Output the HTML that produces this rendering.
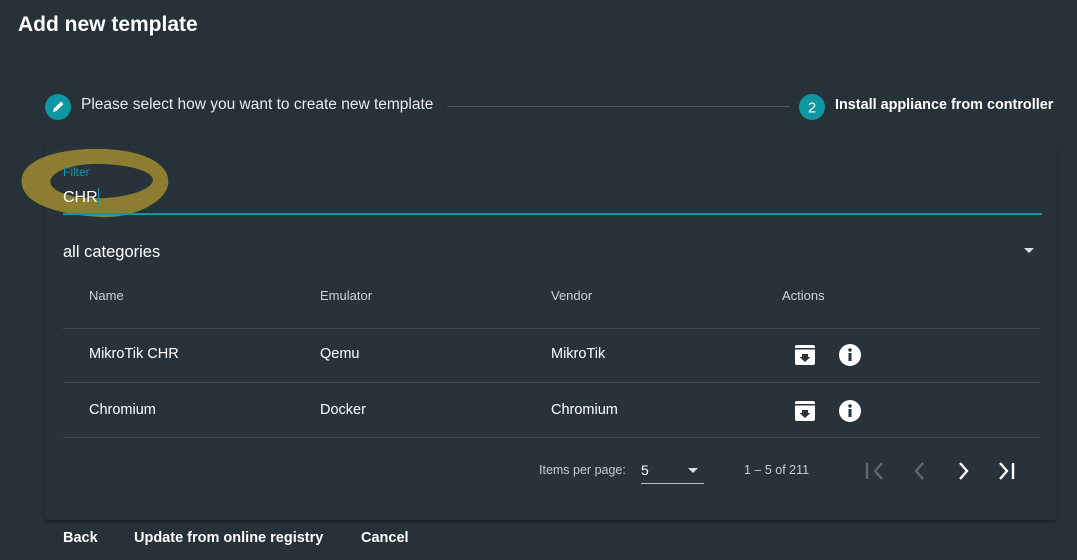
<!DOCTYPE html>
<html><head><meta charset="utf-8"><style>
body{margin:0;width:1077px;height:560px;background:#263238;font-family:"Liberation Sans",sans-serif;color:#fff;position:relative;overflow:hidden}
.a{position:absolute;white-space:nowrap}
.card{position:absolute;left:45px;top:145px;width:1012px;height:375px;background:#28323a;border-radius:4px;box-shadow:0 2px 3px rgba(0,0,0,.35)}
.th{font-size:13px;color:#cfd3d6;top:288px}
.td{font-size:14.5px;color:#fff;margin-top:1px}
.hr{position:absolute;left:63px;width:977px;height:1px;background:#3f4a52}
</style></head><body>
<div class="a" style="left:18px;top:13px;font-size:21px;font-weight:bold">Add new template</div>
<svg class="a" style="left:45px;top:94px" width="26" height="26" viewBox="0 0 26 26"><circle cx="13" cy="13" r="13" fill="#0c97a3"/><path d="M8 18 l1-3.5 7-7 2.5 2.5-7 7z" fill="#fff"/></svg>
<div class="a" style="left:81px;top:96px;font-size:15.5px;color:#e8eaeb">Please select how you want to create new template</div>
<div class="a" style="left:447px;top:106px;width:343px;height:1px;background:#4a555c"></div>
<svg class="a" style="left:799px;top:94px" width="26" height="26"><circle cx="13" cy="13" r="13" fill="#0c97a3"/><text x="13" y="18.5" font-size="15" fill="#fff" text-anchor="middle" font-family="Liberation Sans">2</text></svg>
<div class="a" style="left:835px;top:97px;font-size:14.4px;font-weight:bold">Install appliance from controller</div>
<div class="card"></div>
<svg class="a" style="left:16px;top:143px" width="160" height="80"><path d="M72 6 C124 4 156 20 152 42 C148 62 112 76 84 74 C50 72 10 64 6 42 C2 20 32 8 72 6 Z M36 34 C30 42 40 50 60 54 C90 58 128 52 136 40 C142 30 118 22 86 21 C62 20 42 26 36 34Z" fill="#8c7d30" fill-rule="evenodd"/></svg>
<div class="a" style="left:63px;top:165px;font-size:12px;color:#0c97a3">Filter</div>
<div class="a" style="left:63px;top:188px;font-size:16px">CHR<span style="display:inline-block;width:1px;height:17px;background:#0c97a3;vertical-align:-3px"></span></div>
<div class="a" style="left:63px;top:213px;width:979px;height:2px;background:#0c97a3"></div>
<div class="a" style="left:63px;top:243px;font-size:16.5px">all categories</div>
<div class="a" style="left:1024px;top:248px;width:0;height:0;border-left:5px solid transparent;border-right:5px solid transparent;border-top:5px solid #ddd"></div>
<div class="a th" style="left:89px">Name</div><div class="a th" style="left:320px">Emulator</div><div class="a th" style="left:551px">Vendor</div><div class="a th" style="left:782px">Actions</div>
<div class="hr" style="top:328px"></div>
<div class="a td" style="left:89px;top:345px">MikroTik CHR</div><div class="a td" style="left:320px;top:345px">Qemu</div><div class="a td" style="left:551px;top:345px">MikroTik</div>
<div class="hr" style="top:382px"></div>
<div class="a td" style="left:89px;top:401px">Chromium</div><div class="a td" style="left:320px;top:401px">Docker</div><div class="a td" style="left:551px;top:401px">Chromium</div>
<div class="hr" style="top:437px"></div>
<svg class="a" style="left:794px;top:344px" width="70" height="22"><rect x="1" y="1" width="20" height="20" rx="2" fill="#fff"/><rect x="1" y="4" width="20" height="1.5" fill="#28323a"/><path d="M8 10h6v3h2.5l-5.5 5-5.5-5H8z" fill="#28323a"/><circle cx="56" cy="11" r="11" fill="#fff"/><rect x="54.5" y="9" width="3" height="8" fill="#28323a"/><circle cx="56" cy="6" r="1.7" fill="#28323a"/></svg>
<svg class="a" style="left:794px;top:400px" width="70" height="22"><rect x="1" y="1" width="20" height="20" rx="2" fill="#fff"/><rect x="1" y="4" width="20" height="1.5" fill="#28323a"/><path d="M8 10h6v3h2.5l-5.5 5-5.5-5H8z" fill="#28323a"/><circle cx="56" cy="11" r="11" fill="#fff"/><rect x="54.5" y="9" width="3" height="8" fill="#28323a"/><circle cx="56" cy="6" r="1.7" fill="#28323a"/></svg>
<div class="a" style="left:539px;top:463px;font-size:12.5px;color:#c8ccce">Items per page:</div>
<div class="a" style="left:641px;top:462px;font-size:14px">5</div>
<div class="a" style="left:688px;top:468px;width:0;height:0;border-left:5px solid transparent;border-right:5px solid transparent;border-top:5px solid #ddd"></div>
<div class="a" style="left:641px;top:483px;width:63px;height:1px;background:#bbb"></div>
<div class="a" style="left:744px;top:463px;font-size:12.5px;color:#c8ccce">1 – 5 of 211</div>
<svg class="a" style="left:860px;top:458px" width="170" height="26" fill="none" stroke-width="2.4"><g stroke="#5d676e"><path d="M7 5v16M22 5l-7 8 7 8"/><path d="M63 5l-7 8 7 8"/></g><g stroke="#fff"><path d="M100 5l7 8-7 8"/><path d="M140 5l7 8-7 8M153 5v16"/></g></svg>
<div class="a" style="left:63px;top:530px;font-size:14.5px;font-weight:bold">Back</div>
<div class="a" style="left:134px;top:530px;font-size:14.5px;font-weight:bold">Update from online registry</div>
<div class="a" style="left:361px;top:530px;font-size:14.5px;font-weight:bold">Cancel</div>
</body></html>
